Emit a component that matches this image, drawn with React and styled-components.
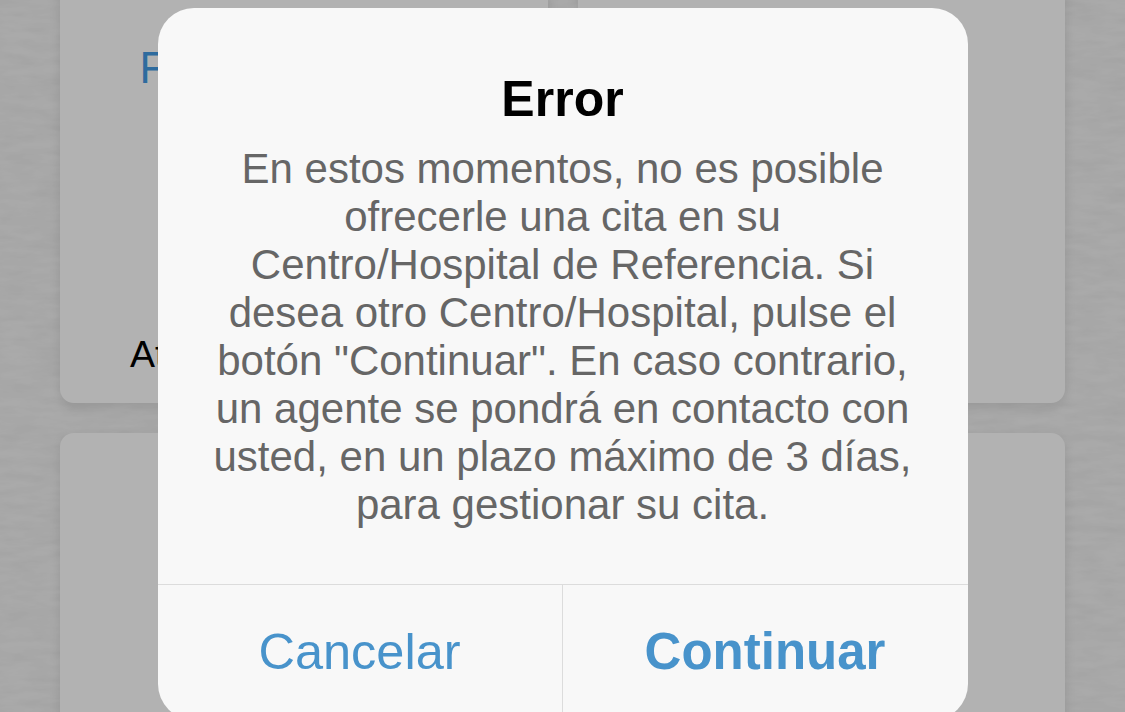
import React from "react";
import styled, { createGlobalStyle } from "styled-components";

const Global = createGlobalStyle`
  html, body { margin: 0; padding: 0; background: #f0f0f0; }
  body { font-family: "Liberation Sans", Arial, sans-serif; }
`
const Page = styled.div`
  position: relative;
  width: 1125px;
  height: 712px;
  overflow: hidden;
  background: #f4f4f4;
`
const Texture = styled.svg`
  position: absolute;
  inset: 0;
  width: 100%;
  height: 100%;
`
const Cards = styled.div`
  position: relative;
  display: grid;
  grid-template-columns: 488px 487px;
  grid-auto-rows: 423px;
  gap: 30px;
  margin-top: -20px;
  padding: 0 60px;
`
const Card = styled.div`
  display: flex;
  flex-direction: column;
  justify-content: space-between;
  padding: 63px 0 26px;
  background: #fff;
  border-radius: 14px;
  box-shadow: 0 4px 12px rgba(0, 0, 0, 0.1);
  text-align: center;
`
const CardTitle = styled.div`
  font-size: 43.5px;
  line-height: 50px;
  color: #439ae3;
`
const CardText = styled.div`
  font-size: 37.5px;
  line-height: 46px;
  color: #000;
`
const Overlay = styled.div`
  position: absolute;
  inset: 0;
  display: flex;
  justify-content: center;
  padding-top: 8px;
  background: rgba(0, 0, 0, 0.3);
`
const Dialog = styled.div`
  display: flex;
  flex-direction: column;
  flex: none;
  width: 810px;
  height: 712px;
  background: #f8f8f8;
  border-radius: 36px;
`
const Content = styled.div`
  box-sizing: border-box;
  height: 576px;
  padding: 61px 50px 0;
  text-align: center;
`
const Title = styled.h2`
  margin: 0 0 16px;
  font-size: 50px;
  line-height: 60px;
  font-weight: 700;
  color: #000;
`
const Message = styled.p`
  margin: 0;
  font-size: 42px;
  line-height: 48px;
  color: #666;
`
const Actions = styled.div`
  display: grid;
  grid-template-columns: 404px 1fr;
  height: 132px;
  border-top: 1px solid #dcdcdc;
`
const Action = styled.div`
  display: flex;
  align-items: center;
  justify-content: center;
  font-size: ${(p) => (p.$primary ? "51px" : "50.5px")};
  font-weight: ${(p) => (p.$primary ? 700 : 400)};
  color: #4893cb;
  border-left: ${(p) => (p.$primary ? "1px solid #dcdcdc" : "none")};
`

const App = () => {
  return (
    <Page>
      <Global />
      <Texture aria-hidden="true">
        <filter id="paper">
          <feTurbulence type="fractalNoise" baseFrequency="0.03 0.12" numOctaves="3" seed="4" />
          <feColorMatrix values="0 0 0 0 0  0 0 0 0 0  0 0 0 0 0  0.5 0 0 0 -0.12" />
        </filter>
        <rect width="100%" height="100%" filter="url(#paper)" opacity="0.12" />
      </Texture>
      <Cards>
        <Card>
          <CardTitle>Fechas de la cita</CardTitle>
          <CardText>Atención Primaria de</CardText>
        </Card>
        <Card />
        <Card />
        <Card />
      </Cards>
      <Overlay>
        <Dialog role="alertdialog">
          <Content>
            <Title>Error</Title>
            <Message>
              En estos momentos, no es posible ofrecerle una cita en su Centro/Hospital de Referencia. Si desea otro Centro/Hospital, pulse el botón "Continuar". En caso contrario, un agente se pondrá en contacto con usted, en un plazo máximo de 3 días, para gestionar su cita.
            </Message>
          </Content>
          <Actions>
            <Action>Cancelar</Action>
            <Action $primary>Continuar</Action>
          </Actions>
        </Dialog>
      </Overlay>
    </Page>
  )
}
export default App
